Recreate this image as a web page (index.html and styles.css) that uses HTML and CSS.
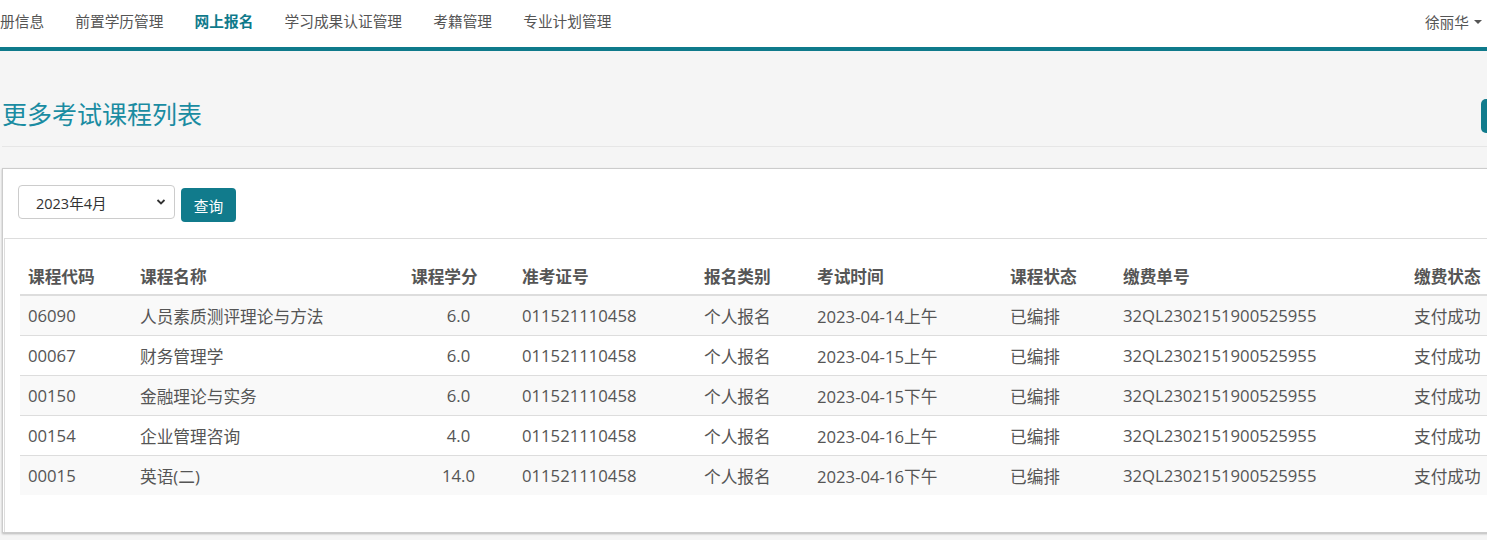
FILE: index.html
```html
<!DOCTYPE html>
<html lang="zh">
<head>
<meta charset="utf-8">
<link rel="stylesheet" href="styles.css">
</head>
<body>
<div class="navbar">
  <ul class="nav">
    <li class="first">册信息</li>
    <li>前置学历管理</li>
    <li class="active">网上报名</li>
    <li>学习成果认证管理</li>
    <li>考籍管理</li>
    <li>专业计划管理</li>
  </ul>
  <div class="user">徐丽华 <span class="caret"></span></div>
</div>
<div class="main">
  <div class="page-header">
    <h1>更多考试课程列表</h1>
    <span class="side-btn"></span>
  </div>
  <div class="panel">
    <div class="filter">
      <div class="select">2023年4月<svg class="chev" width="10" height="8" viewBox="0 0 10 8"><path d="M1.5 2 L5 5.5 L8.5 2" fill="none" stroke="#333" stroke-width="1.8"/></svg></div>
      <button class="btn">查询</button>
    </div>
    <div class="table-wrap">
      <table>
        <colgroup>
          <col class="c1"><col class="c2"><col class="c3"><col class="c4"><col class="c5"><col class="c6"><col class="c7"><col class="c8"><col class="c9">
        </colgroup>
        <thead>
          <tr>
            <th>课程代码</th><th>课程名称</th><th>课程学分</th><th>准考证号</th><th>报名类别</th><th>考试时间</th><th>课程状态</th><th>缴费单号</th><th>缴费状态</th>
          </tr>
        </thead>
        <tbody>
          <tr><td>06090</td><td>人员素质测评理论与方法</td><td class="num">6.0</td><td>011521110458</td><td>个人报名</td><td>2023-04-14上午</td><td>已编排</td><td>32QL2302151900525955</td><td>支付成功</td></tr>
          <tr><td>00067</td><td>财务管理学</td><td class="num">6.0</td><td>011521110458</td><td>个人报名</td><td>2023-04-15上午</td><td>已编排</td><td>32QL2302151900525955</td><td>支付成功</td></tr>
          <tr><td>00150</td><td>金融理论与实务</td><td class="num">6.0</td><td>011521110458</td><td>个人报名</td><td>2023-04-15下午</td><td>已编排</td><td>32QL2302151900525955</td><td>支付成功</td></tr>
          <tr><td>00154</td><td>企业管理咨询</td><td class="num">4.0</td><td>011521110458</td><td>个人报名</td><td>2023-04-16上午</td><td>已编排</td><td>32QL2302151900525955</td><td>支付成功</td></tr>
          <tr><td>00015</td><td>英语(二)</td><td class="num">14.0</td><td>011521110458</td><td>个人报名</td><td>2023-04-16下午</td><td>已编排</td><td>32QL2302151900525955</td><td>支付成功</td></tr>
        </tbody>
      </table>
    </div>
  </div>
</div>
</body>
</html>
```
FILE: styles.css
```css
html, body {
  margin: 0;
  padding: 0;
}
body {
  background: #f5f5f5;
  overflow: hidden;
  width: 1487px;
  height: 540px;
  font-family: "Open Sans", "Noto Sans CJK SC", sans-serif;
  color: #555;
}
.navbar {
  height: 47px;
  background: #fff;
  border-bottom: 4px solid #0f7a8b;
  display: flex;
  justify-content: space-between;
  align-items: flex-start;
}
.nav {
  list-style: none;
  margin: 0;
  padding: 0;
  display: flex;
  font-size: 14.7px;
  color: #555;
}
.nav li {
  padding: 0 15.6px;
  line-height: 42px;
}
.nav li.first {
  padding-left: 0;
}
.nav li.active {
  color: #0f7a8b;
  font-weight: bold;
}
.user {
  font-size: 14.7px;
  color: #555;
  padding-right: 5px;
  height: 42px;
  display: flex;
  align-items: center;
  gap: 5px;
}
.caret {
  display: inline-block;
  width: 0;
  height: 0;
  border-left: 4px solid transparent;
  border-right: 4px solid transparent;
  border-top: 4px solid #555;
  margin-top: 2px;
}
.main {
  width: 1600px;
}
.page-header {
  height: 95px;
  border-bottom: 1px solid #e6e6e6;
  display: flex;
  align-items: flex-start;
  justify-content: space-between;
  margin-left: 2px;
}
.page-header h1 {
  margin: 0;
  padding-top: 46px;
  font-size: 25px;
  font-weight: normal;
  line-height: 34px;
  color: #1a8ca2;
}
.side-btn {
  display: block;
  margin-top: 48px;
  margin-right: 89px;
  width: 30px;
  height: 34px;
  border-radius: 5px;
  background: #117b8c;
}
.panel {
  margin: 21px 0 0 2px;
  background: #fff;
  border: 1px solid #ccc;
  border-right: none;
  box-shadow: 0 1px 2px rgba(0,0,0,0.25);
  height: 363px;
}
.filter {
  display: flex;
  align-items: flex-start;
  gap: 6px;
  padding: 16px 15px 0;
  height: 53px;
}
.select {
  box-sizing: border-box;
  width: 157px;
  height: 34px;
  border: 1px solid #ccc;
  border-radius: 4px;
  font-size: 14.5px;
  color: #333;
  display: flex;
  align-items: center;
  justify-content: space-between;
  padding: 0 8px 0 17px;
}
.chev {
  display: block;
}
.btn {
  margin-top: 3px;
  width: 55px;
  height: 34px;
  border: none;
  border-radius: 4px;
  background: #117b8c;
  color: #fff;
  font-family: inherit;
  font-size: 14.7px;
  padding: 0;
}
.table-wrap {
  margin-left: 1px;
  border-top: 1px solid #ddd;
  border-left: 1px solid #ddd;
  padding: 18px 0 0 15px;
  height: 275px;
}
table {
  border-collapse: collapse;
  table-layout: fixed;
  font-size: 16.7px;
  color: #555;
  width: 1506px;
}
th {
  text-align: left;
  font-weight: bold;
  padding: 0 8px;
  height: 37px;
  border-bottom: 2px solid #ddd;
  vertical-align: middle;
  white-space: nowrap;
}
td {
  padding: 0 8px;
  height: 39px;
  border-top: 1px solid #ddd;
  vertical-align: middle;
  white-space: nowrap;
}
tbody tr:nth-child(odd) {
  background: #f9f9f9;
}
tbody tr:first-child td {
  border-top: none;
}
td.num { text-align: center; }
.c1 { width: 112px; }
.c2 { width: 271px; }
.c3 { width: 111px; }
.c4 { width: 182px; }
.c5 { width: 113px; }
.c6 { width: 193px; }
.c7 { width: 113px; }
.c8 { width: 291px; }
.c9 { width: 120px; }
```
